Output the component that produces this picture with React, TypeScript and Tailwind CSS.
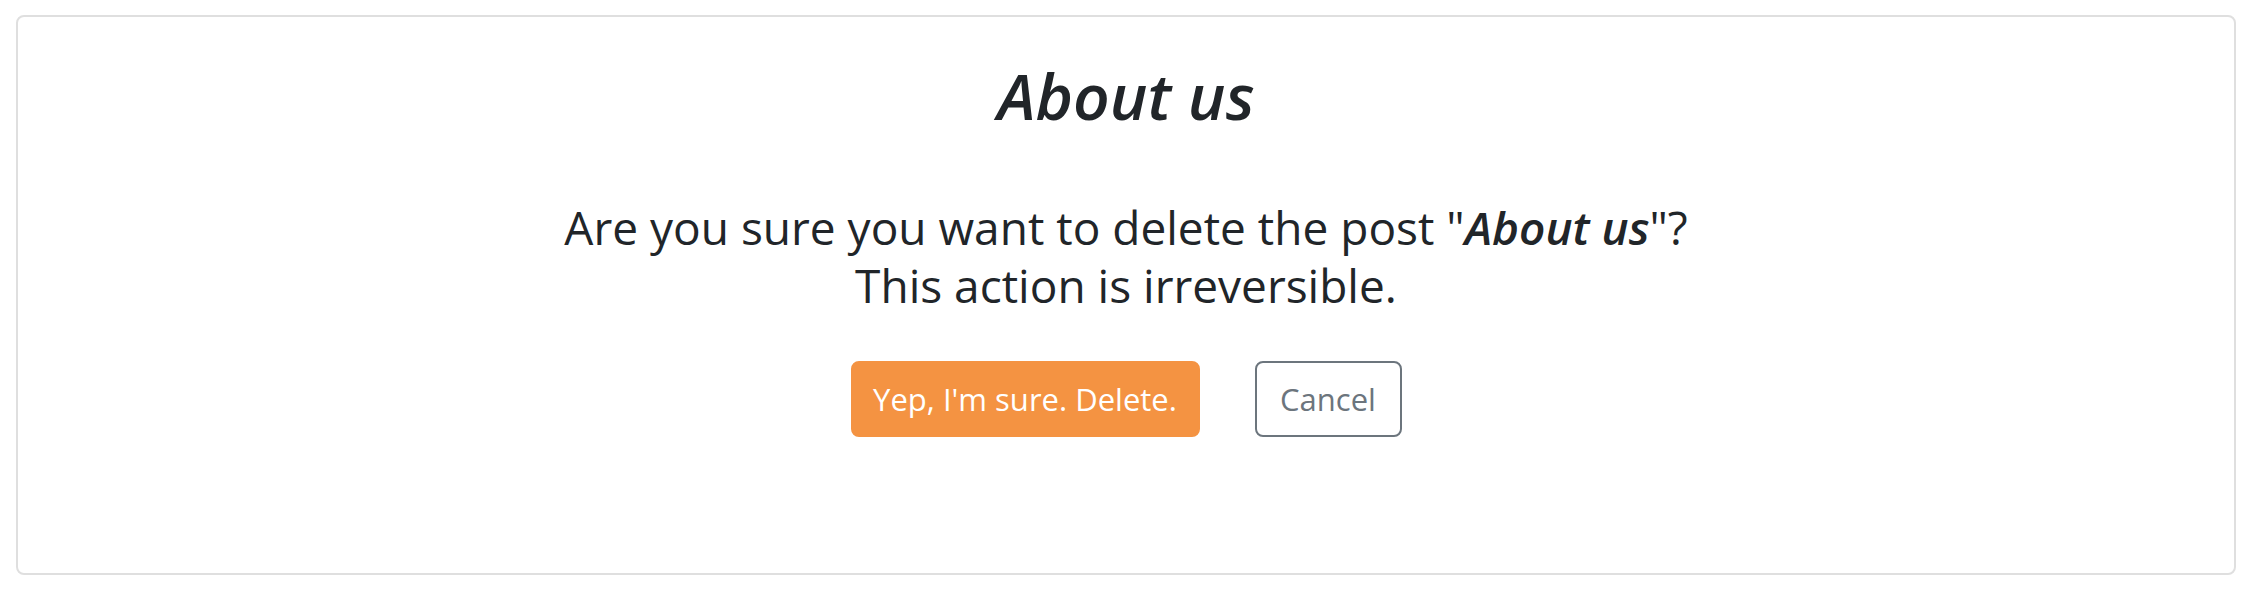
export default function App() {
  return (
    <div className="w-[2256px] h-[594px] bg-white pt-[15px] pl-[16px]" style={{ fontFamily: '"Open Sans", "Noto Sans", sans-serif' }}>
      <div className="w-[2220px] h-[560px] border-2 border-[#dfdfdf] rounded-[8px] flex flex-col items-center pt-[41px]">
        <h2 className="text-[64px] leading-[76px] italic font-semibold text-[#212529]">About us</h2>
        <p className="mt-[64px] text-[46px] leading-[58px] text-[#212529] text-center">
          Are you sure you want to delete the post "<em className="font-semibold">About us</em>"?
          <br />
          This action is irreversible.
        </p>
        <div className="mt-[47px] flex gap-[55px]">
          <button className="h-[76px] w-[349px] flex items-center justify-center rounded-[8px] bg-[#f49342] text-white text-[31px] leading-[46px] border-2 border-[#f49342]">
            Yep, I'm sure. Delete.
          </button>
          <button className="h-[76px] w-[147px] flex items-center justify-center rounded-[8px] bg-white text-[#6c757d] text-[31px] leading-[46px] border-2 border-[#6c757d]">
            Cancel
          </button>
        </div>
      </div>
    </div>
  );
}
